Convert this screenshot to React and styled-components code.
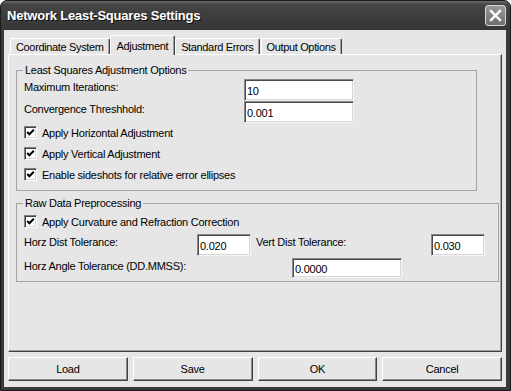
import styled, { createGlobalStyle } from 'styled-components'

const GlobalStyle = createGlobalStyle`
  html, body {
    margin: 0;
    padding: 0;
    background: #ffffff;
  }
  body {
    font-family: "Liberation Sans", Arial, sans-serif;
    font-size: 11px;
    letter-spacing: -0.25px;
    color: #000;
  }
`

const Window = styled.div`
  width: 511px;
  height: 391px;
  box-sizing: border-box;
  display: flex;
  flex-direction: column;
  background: #3a3a3a;
  border: 1px solid #1a1a1a;
  border-radius: 7px 7px 0 0;
  overflow: hidden;
`

const TitleBar = styled.div`
  height: 29px;
  flex: none;
  display: flex;
  align-items: center;
  justify-content: space-between;
  padding: 0 4px 0 6px;
  background: linear-gradient(#6b6b6b 0%, #454545 12%, #3c3c3c 60%, #363636 100%);
`

const Title = styled.span`
  color: #fff;
  font-weight: bold;
  font-size: 13px;
  letter-spacing: -0.2px;
  text-shadow: 1px 1px 0 #111;
`

const CloseBtn = styled.div`
  width: 21px;
  height: 21px;
  box-sizing: border-box;
  border: 1px solid #d8d8d8;
  border-radius: 3px;
  background: linear-gradient(#9a9a9a, #6e6e6e);
  display: flex;
  align-items: center;
  justify-content: center;
`

const Body = styled.div`
  flex: 1;
  margin: 0 4px 3px 3px;
  background: #e6e6e6;
  padding: 5px 4px 6px 4px;
  display: flex;
  flex-direction: column;
`

const TabStrip = styled.div`
  height: 19px;
  display: flex;
  align-items: flex-end;
  padding-left: 2px;
`

const Tab = styled.div`
  box-sizing: border-box;
  height: ${(p) => (p.active ? '20px' : '16px')};
  margin: ${(p) => (p.active ? '0 0 -1px -1px' : '0 1px 0 0')};
  padding: ${(p) => (p.active ? '0 6px' : '0 5px')};
  position: relative;
  z-index: ${(p) => (p.active ? 1 : 0)};
  background: #e6e6e6;
  border-top: 1px solid #fff;
  border-left: 1px solid #fff;
  border-right: 1px solid #404040;
  box-shadow: inset -1px 0 0 #a0a0a0;
  border-radius: 2px 2px 0 0;
  display: flex;
  align-items: center;
  white-space: nowrap;
  letter-spacing: -0.35px;
`

const Panel = styled.div`
  height: 298px;
  box-sizing: border-box;
  border: 1px solid;
  border-color: #fff #404040 #404040 #fff;
  box-shadow: inset -1px -1px 0 #a0a0a0;
  padding: 8px 0 0 7px;
  display: flex;
  flex-direction: column;
`

const Group = styled.fieldset`
  box-sizing: border-box;
  width: ${(p) => p.w}px;
  margin: ${(p) => p.mt || 0}px 0 0 0;
  padding: 0;
  border: 1px solid #a4a4a4;
  min-inline-size: 0;
`

const Legend = styled.legend`
  margin-left: 6px;
  padding: 0 2px;
  line-height: 14px;
  background: #e6e6e6;
`

const GroupBody = styled.div`
  padding: ${(p) => p.pt}px 0 ${(p) => p.pb}px 7px;
  display: flex;
  flex-direction: column;
`

const FieldRow = styled.div`
  display: flex;
  align-items: flex-start;
  margin-top: ${(p) => p.mt || 0}px;
`

const Label = styled.span`
  width: ${(p) => p.w}px;
  flex: none;
  line-height: 14px;
  margin: 1px 0 0 ${(p) => p.ml || 0}px;
  white-space: nowrap;
`

const TextBox = styled.input`
  width: ${(p) => p.w}px;
  height: ${(p) => p.h || 22}px;
  box-sizing: border-box;
  flex: none;
  margin: 0;
  padding: 1px 2px 0 2px;
  font: inherit;
  letter-spacing: -0.25px;
  background: #fff;
  border: 1px solid;
  border-color: #8a8a8a #f4f4f4 #f4f4f4 #8a8a8a;
  box-shadow: inset 1px 1px 0 #4a4a4a, inset -1px -1px 0 #d6d6d6;
  outline: none;
`

const CheckRow = styled.div`
  height: 21px;
  display: flex;
  align-items: center;
  gap: 5px;
  margin-top: ${(p) => p.mt || 0}px;
`

const Box = styled.span`
  width: 13px;
  height: 13px;
  box-sizing: border-box;
  flex: none;
  background: #fff;
  border: 1px solid;
  border-color: #808080 #fff #fff #808080;
  box-shadow: inset 1px 1px 0 #404040, inset -1px -1px 0 #d4d4d4;
  display: flex;
  align-items: center;
  justify-content: center;
`

const ButtonRow = styled.div`
  display: grid;
  grid-template-columns: repeat(4, 1fr);
  gap: 5px;
  margin-top: 5px;
  height: 24px;
`

const Button = styled.button`
  box-sizing: border-box;
  height: 24px;
  margin: 0;
  padding: 0;
  font: inherit;
  letter-spacing: -0.25px;
  color: #000;
  background: #e6e6e6;
  border: 1px solid;
  border-color: #fff #404040 #404040 #fff;
  box-shadow: inset -1px -1px 0 #8a8a8a;
`

function Check({ label, mt }) {
  return (
    <CheckRow mt={mt}>
      <Box>
        <svg width="9" height="9" viewBox="0 0 9 9">
          <polyline points="1.2,4 3.4,6.3 7.8,1.8" fill="none" stroke="#000" strokeWidth="2" />
        </svg>
      </Box>
      <span>{label}</span>
    </CheckRow>
  )
}

export default function App() {
  const tabs = ['Coordinate System', 'Adjustment', 'Standard Errors', 'Output Options']
  const buttons = ['Load', 'Save', 'OK', 'Cancel']

  return (
    <>
      <GlobalStyle />
      <Window>
        <TitleBar>
          <Title>Network Least-Squares Settings</Title>
          <CloseBtn>
            <svg width="13" height="13" viewBox="0 0 13 13">
              <path d="M2 2 L11 11 M11 2 L2 11" stroke="#fff" strokeWidth="2.4" strokeLinecap="square" />
            </svg>
          </CloseBtn>
        </TitleBar>
        <Body>
          <TabStrip>
            {tabs.map((t) => (
              <Tab key={t} active={t === 'Adjustment'}>
                {t}
              </Tab>
            ))}
          </TabStrip>
          <Panel>
            <Group w={461}>
              <Legend>Least Squares Adjustment Options</Legend>
              <GroupBody pt={2} pb={5}>
                <FieldRow>
                  <Label w={220}>Maximum Iterations:</Label>
                  <TextBox w={110} defaultValue="10" readOnly />
                </FieldRow>
                <FieldRow>
                  <Label w={220}>Convergence Threshhold:</Label>
                  <TextBox w={110} defaultValue="0.001" readOnly />
                </FieldRow>
                <Check label="Apply Horizontal Adjustment" mt={-1} />
                <Check label="Apply Vertical Adjustment" />
                <Check label="Enable sideshots for relative error ellipses" />
              </GroupBody>
            </Group>
            <Group w={483} mt={5}>
              <Legend>Raw Data Preprocessing</Legend>
              <GroupBody pt={1} pb={3}>
                <Check label="Apply Curvature and Refraction Correction" />
                <FieldRow mt={2}>
                  <Label w={173}>Horz Dist Tolerance:</Label>
                  <TextBox w={54} defaultValue="0.020" readOnly />
                  <Label w={175} ml={5}>Vert Dist Tolerance:</Label>
                  <TextBox w={54} defaultValue="0.030" readOnly />
                </FieldRow>
                <FieldRow mt={2}>
                  <Label w={268}>Horz Angle Tolerance (DD.MMSS):</Label>
                  <TextBox w={110} h={20} defaultValue="0.0000" readOnly />
                </FieldRow>
              </GroupBody>
            </Group>
          </Panel>
          <ButtonRow>
            {buttons.map((b) => (
              <Button key={b}>{b}</Button>
            ))}
          </ButtonRow>
        </Body>
      </Window>
    </>
  )
}
